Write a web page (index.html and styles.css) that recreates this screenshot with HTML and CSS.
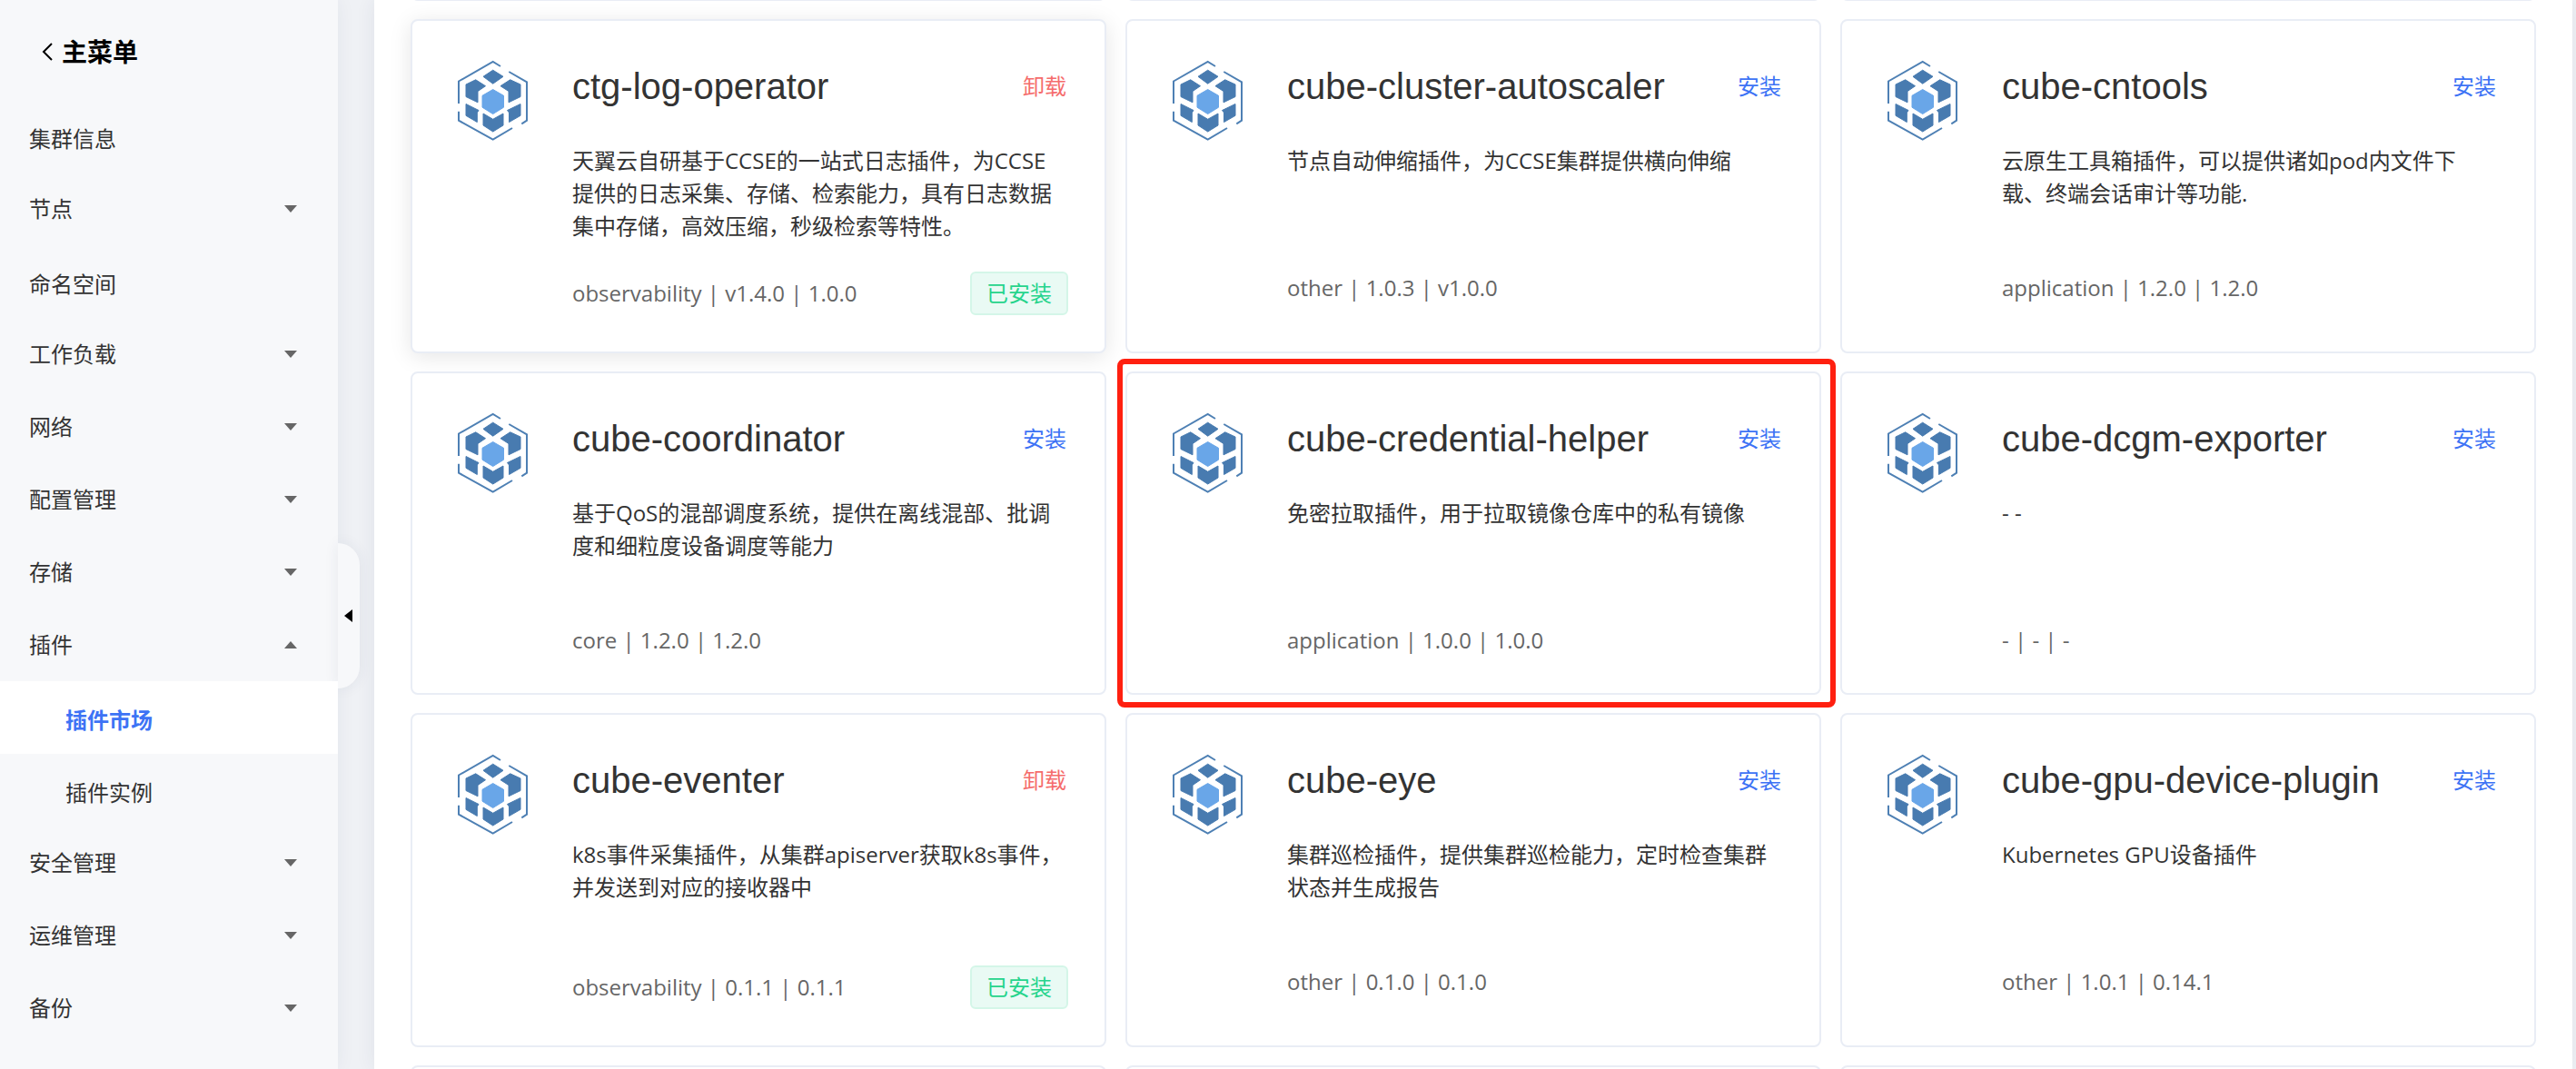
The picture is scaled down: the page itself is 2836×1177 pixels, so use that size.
FILE: index.html
```html
<!doctype html>
<html lang="zh-CN">
  <head>
    <meta charset="UTF-8" />
    <meta name="viewport" content="width=device-width, initial-scale=1.0" />
    <title>插件市场</title>
    <link rel="stylesheet" href="styles.css">
  </head>
  <body>
    <svg width="0" height="0" class="sprite" aria-hidden="true">
      <symbol id="cube" viewBox="0 0 96 96">
        <g fill="none" stroke="#4e80b4" stroke-width="2">
          <path d="M11 51V26.500L48.700 5L57 10" />
          <path d="M66.300 16L86 27.300V69.700L80.300 73.300" />
          <path d="M11 59.700V69.700L48.700 90.700L70 78" />
        </g>
        <g fill="#487bb0" stroke="#487bb0" stroke-width="1" stroke-linejoin="round">
          <path d="M48.700 14.200L60 21.300L48.700 29.200L38 21.300Z" />
          <path d="M19 30L29.700 24.800L40.500 31.700L32 37.500V49.800L19 43.500Z" />
          <path d="M79 30L67.700 24.800L57 31.700L66 37.500V49.800L79 43.500Z" />
          <path d="M19 51.500L33 58.500L31.300 61V71.500L19 64.300Z" />
          <path d="M79 51.500L64.500 58.500L66.500 61V71.500L79 64.300Z" />
          <path d="M38 62L48.700 68.300L60 62V75L48.700 82L38 75Z" />
        </g>
        <path d="M48.700 35.500L60.500 42.300V55.200L48.700 62.500L37 55.200V42.300Z" fill="#69a6e8" stroke="#69a6e8" stroke-width="1" stroke-linejoin="round" />
      </symbol>
    </svg>

    <div class="layout">
      <aside class="sidebar">
        <a href="#" class="back">
          <svg width="12" height="20" viewBox="0 0 12 20" aria-hidden="true">
            <path d="M11 1L2 10L11 19" fill="none" stroke="#000" stroke-width="2" />
          </svg>
          主菜单
        </a>
        <nav class="menu">
          <a href="#" class="item leaf">集群信息</a>
          <a href="#" class="item">节点<span class="arrow"></span></a>
          <a href="#" class="item leaf">命名空间</a>
          <a href="#" class="item">工作负载<span class="arrow"></span></a>
          <a href="#" class="item">网络<span class="arrow"></span></a>
          <a href="#" class="item">配置管理<span class="arrow"></span></a>
          <a href="#" class="item">存储<span class="arrow"></span></a>
          <a href="#" class="item">插件<span class="arrow up"></span></a>
          <a href="#" class="item leaf sub active">插件市场</a>
          <a href="#" class="item leaf sub">插件实例</a>
          <a href="#" class="item">安全管理<span class="arrow"></span></a>
          <a href="#" class="item">运维管理<span class="arrow"></span></a>
          <a href="#" class="item">备份<span class="arrow"></span></a>
        </nav>
        <button class="collapse" type="button" aria-label="收起菜单"></button>
      </aside>

      <main class="content">
        <div class="cards">
          <div class="card card-end"></div>
          <div class="card card-end"></div>
          <div class="card card-end"></div>

          <article class="card hover">
            <svg class="logo" aria-hidden="true"><use href="#cube" /></svg>
            <div class="info">
              <div class="head">
                <h2>ctg-log-operator</h2>
                <button type="button" class="action remove">卸载</button>
              </div>
              <p class="desc">天翼云自研基于CCSE的一站式日志插件，为CCSE提供的日志采集、存储、检索能力，具有日志数据集中存储，高效压缩，秒级检索等特性。</p>
              <div class="foot">
                <span>observability | v1.4.0 | 1.0.0</span>
                <span class="tag">已安装</span>
              </div>
            </div>
          </article>

          <article class="card">
            <svg class="logo" aria-hidden="true"><use href="#cube" /></svg>
            <div class="info">
              <div class="head">
                <h2>cube-cluster-autoscaler</h2>
                <button type="button" class="action">安装</button>
              </div>
              <p class="desc">节点自动伸缩插件，为CCSE集群提供横向伸缩</p>
              <div class="foot"><span>other | 1.0.3 | v1.0.0</span></div>
            </div>
          </article>

          <article class="card">
            <svg class="logo" aria-hidden="true"><use href="#cube" /></svg>
            <div class="info">
              <div class="head">
                <h2>cube-cntools</h2>
                <button type="button" class="action">安装</button>
              </div>
              <p class="desc">云原生工具箱插件，可以提供诸如pod内文件下载、终端会话审计等功能.</p>
              <div class="foot"><span>application | 1.2.0 | 1.2.0</span></div>
            </div>
          </article>

          <article class="card">
            <svg class="logo" aria-hidden="true"><use href="#cube" /></svg>
            <div class="info">
              <div class="head">
                <h2>cube-coordinator</h2>
                <button type="button" class="action">安装</button>
              </div>
              <p class="desc">基于QoS的混部调度系统，提供在离线混部、批调度和细粒度设备调度等能力</p>
              <div class="foot"><span>core | 1.2.0 | 1.2.0</span></div>
            </div>
          </article>

          <article class="card marked">
            <svg class="logo" aria-hidden="true"><use href="#cube" /></svg>
            <div class="info">
              <div class="head">
                <h2>cube-credential-helper</h2>
                <button type="button" class="action">安装</button>
              </div>
              <p class="desc">免密拉取插件，用于拉取镜像仓库中的私有镜像</p>
              <div class="foot"><span>application | 1.0.0 | 1.0.0</span></div>
            </div>
          </article>

          <article class="card">
            <svg class="logo" aria-hidden="true"><use href="#cube" /></svg>
            <div class="info">
              <div class="head">
                <h2>cube-dcgm-exporter</h2>
                <button type="button" class="action">安装</button>
              </div>
              <p class="desc">- -</p>
              <div class="foot"><span>- | - | -</span></div>
            </div>
          </article>

          <article class="card">
            <svg class="logo" aria-hidden="true"><use href="#cube" /></svg>
            <div class="info">
              <div class="head">
                <h2>cube-eventer</h2>
                <button type="button" class="action remove">卸载</button>
              </div>
              <p class="desc">k8s事件采集插件，从集群apiserver获取k8s事件，并发送到对应的接收器中</p>
              <div class="foot">
                <span>observability | 0.1.1 | 0.1.1</span>
                <span class="tag">已安装</span>
              </div>
            </div>
          </article>

          <article class="card">
            <svg class="logo" aria-hidden="true"><use href="#cube" /></svg>
            <div class="info">
              <div class="head">
                <h2>cube-eye</h2>
                <button type="button" class="action">安装</button>
              </div>
              <p class="desc">集群巡检插件，提供集群巡检能力，定时检查集群状态并生成报告</p>
              <div class="foot"><span>other | 0.1.0 | 0.1.0</span></div>
            </div>
          </article>

          <article class="card">
            <svg class="logo" aria-hidden="true"><use href="#cube" /></svg>
            <div class="info">
              <div class="head">
                <h2>cube-gpu-device-plugin</h2>
                <button type="button" class="action">安装</button>
              </div>
              <p class="desc">Kubernetes GPU设备插件</p>
              <div class="foot"><span>other | 1.0.1 | 0.14.1</span></div>
            </div>
          </article>

          <div class="card card-end"></div>
          <div class="card card-end"></div>
          <div class="card card-end"></div>
        </div>
      </main>
    </div>
  </body>
</html>
```

FILE: styles.css
```css
* {
  box-sizing: border-box;
}
body {
  margin: 0;
  font-family: "Open Sans", "Noto Sans CJK SC", sans-serif;
  font-size: 24px;
  line-height: 36px;
  color: #333;
  background: #eff1f5;
}
.sprite {
  position: absolute;
}
.layout {
  display: flex;
  gap: 40px;
  height: 100vh;
  padding-right: 4px;
  overflow: hidden;
}

/* sidebar */
.sidebar {
  position: relative;
  flex: 0 0 372px;
  background: #f7f8fa;
  box-shadow: 0 0 20px rgba(40, 50, 90, 0.06);
}
.back {
  display: flex;
  align-items: center;
  gap: 10px;
  height: 110px;
  padding: 4px 46px 0;
  font-size: 28px;
  font-weight: bold;
  color: #000;
  text-decoration: none;
}
.menu {
  display: flex;
  flex-direction: column;
}
.item {
  display: flex;
  align-items: center;
  justify-content: space-between;
  height: 80px;
  padding: 0 45px 0 32px;
  color: #333;
  text-decoration: none;
}
.leaf {
  padding-top: 6px;
}
.sub {
  padding-left: 72px;
}
.active {
  position: relative;
  z-index: 1;
  background: #fff;
  color: #3d73f5;
  font-weight: bold;
}
.arrow {
  border: 7px solid transparent;
  border-top: 8px solid #666;
  border-bottom: 0;
}
.arrow.up {
  border-top: 0;
  border-bottom: 8px solid #666;
}
.collapse {
  position: absolute;
  top: 598px;
  left: 100%;
  width: 24px;
  height: 160px;
  padding: 0 0 0 7px;
  border: 0;
  border-radius: 0 24px 24px 0;
  background: #f7f8fa;
  box-shadow: 0 0 16px rgba(40, 50, 90, 0.08);
}
.collapse::before {
  content: "";
  display: block;
  width: 0;
  border: 7px solid transparent;
  border-right: 9px solid #000;
  border-left: 0;
}

/* plugin list */
.content {
  flex: 1;
  padding: 0 40px;
  background: #fff;
  box-shadow: 0 0 20px rgba(40, 50, 90, 0.08);
}
.cards {
  display: grid;
  grid-template-columns: repeat(3, 1fr);
  gap: 20px 21px;
  margin-top: -19px;
}
.card {
  position: relative;
  display: flex;
  gap: 40px;
  padding: 40px;
  border: 2px solid #e9edf5;
  border-radius: 8px;
  background: #fff;
}
.card-end {
  height: 20px;
  padding: 0;
}
.hover {
  box-shadow: 0 4px 24px rgba(0, 0, 0, 0.1);
}
.marked::after {
  content: "";
  position: absolute;
  inset: -16px -18px -16px -11px;
  border: 6px solid #ff2010;
  border-radius: 8px;
  pointer-events: none;
}
.logo {
  flex: none;
  width: 96px;
  height: 96px;
}
.info {
  flex: 1;
}
.head,
.foot {
  display: flex;
  align-items: center;
  justify-content: space-between;
}
.head {
  height: 64px;
  padding-right: 2px;
}
h2 {
  margin: 0;
  font: 40px "Liberation Sans", Arial, sans-serif;
}
.action {
  padding: 0;
  border: 0;
  background: none;
  font: inherit;
  color: #3d73f5;
  cursor: pointer;
}
.remove {
  color: #f56c6c;
}
.desc {
  min-height: 108px;
  margin: 32px 0;
  padding-right: 6px;
}
.foot {
  color: #666;
}
.tag {
  padding: 4px 16px;
  border: 2px solid #d4f6e8;
  border-radius: 6px;
  background: #e9faf4;
  color: #26d48c;
}
```
